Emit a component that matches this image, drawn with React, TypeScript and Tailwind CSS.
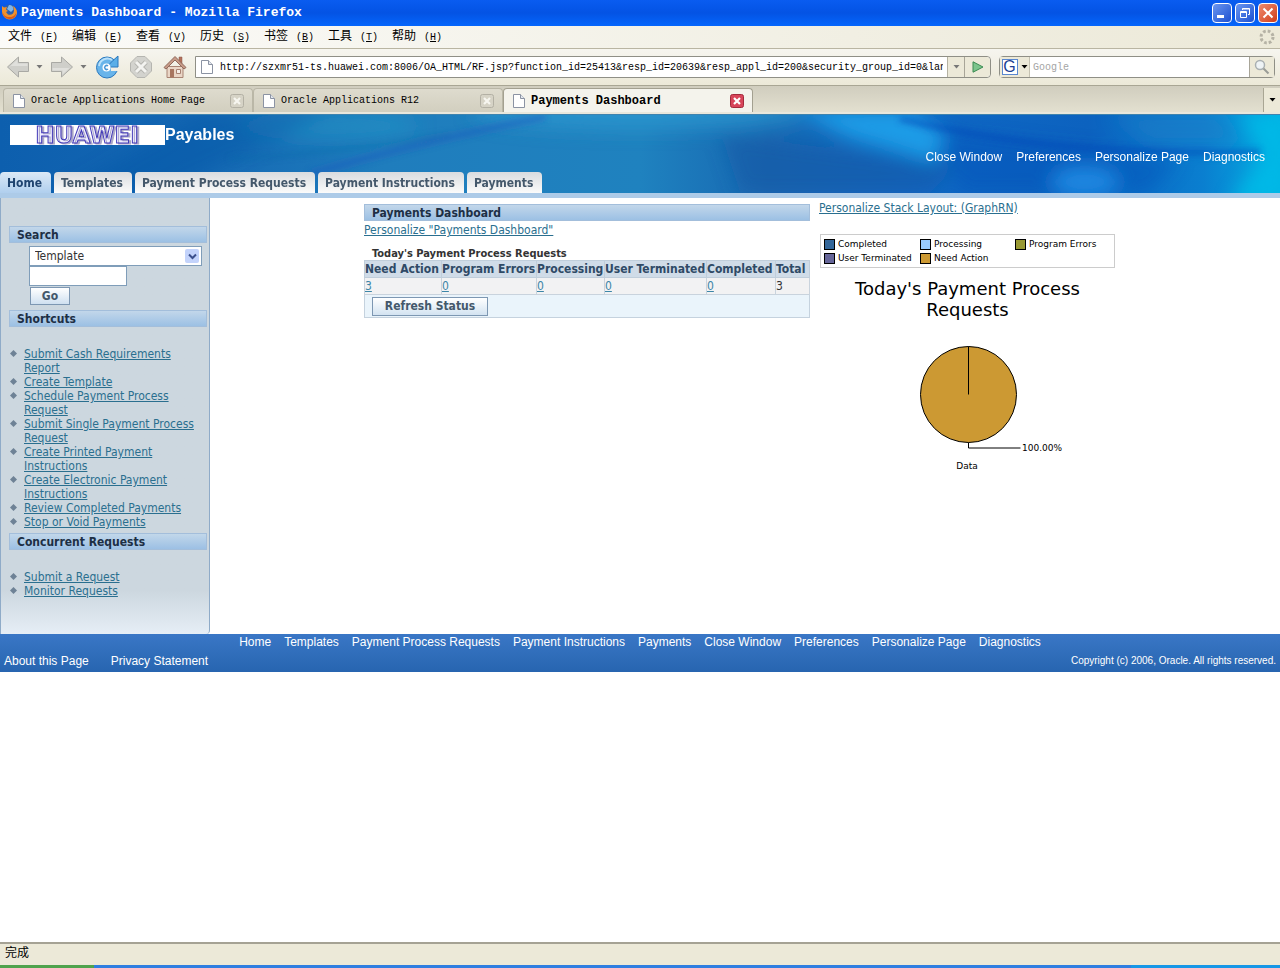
import React from 'react';

interface BrowserTab {
  title: string;
  active?: boolean;
}

interface LegendItem {
  label: string;
  color: string;
}

const menus = [
  { label: '文件', key: 'F' },
  { label: '编辑', key: 'E' },
  { label: '查看', key: 'V' },
  { label: '历史', key: 'S' },
  { label: '书签', key: 'B' },
  { label: '工具', key: 'T' },
  { label: '帮助', key: 'H' }
];

const browserTabs: BrowserTab[] = [
  { title: 'Oracle Applications Home Page' },
  { title: 'Oracle Applications R12' },
  { title: 'Payments Dashboard', active: true }
];

const pageTabs = ['Home', 'Templates', 'Payment Process Requests', 'Payment Instructions', 'Payments'];
const globalLinks = ['Close Window', 'Preferences', 'Personalize Page', 'Diagnostics'];

const shortcuts = [
  'Submit Cash Requirements Report',
  'Create Template',
  'Schedule Payment Process Request',
  'Submit Single Payment Process Request',
  'Create Printed Payment Instructions',
  'Create Electronic Payment Instructions',
  'Review Completed Payments',
  'Stop or Void Payments'
];
const concurrent = ['Submit a Request', 'Monitor Requests'];

const columns = [
  { name: 'Need Action', value: 3, width: 'w-[77px]' },
  { name: 'Program Errors', value: 0, width: 'w-[95px]' },
  { name: 'Processing', value: 0, width: 'w-[68px]' },
  { name: 'User Terminated', value: 0, width: 'w-[102px]' },
  { name: 'Completed', value: 0, width: 'w-[69px]' }
];

const legend: LegendItem[] = [
  { label: 'Completed', color: 'bg-[#336699]' },
  { label: 'Processing', color: 'bg-[#99ccff]' },
  { label: 'Program Errors', color: 'bg-[#999933]' },
  { label: 'User Terminated', color: 'bg-[#666699]' },
  { label: 'Need Action', color: 'bg-[#cc9933]' }
];

const Caret = ({ className = 'text-[#777]' }: { className?: string }) => (
  <svg width="7" height="4" viewBox="0 0 7 4" className={className}>
    <path d="M0.5 0h6L3.5 3.5z" fill="currentColor" />
  </svg>
);

const PageIcon = () => (
  <svg width="12" height="14" viewBox="0 0 12 14" className="shrink-0">
    <path d="M0.5 0.5h7l4 4v9h-11z" fill="#fff" stroke="#8b93a3" />
    <path d="M7.5 0.5v4h4" fill="#e3e8ef" stroke="#8b93a3" />
  </svg>
);

const FirefoxIcon = () => (
  <svg width="17" height="17" viewBox="0 0 17 17" className="mb-1 shrink-0">
    <circle cx="8.500" cy="8.500" r="7" fill="#2d5fae" />
    <path d="M8 2c3 0 4.500 2 4.500 4.500L10 9 6 6z" fill="#7fb6ea" />
    <path d="M1 3l2 1.500L6 4 5 6.500l2 1.500-2 1 2 2.500c3 1 6-.5 6-4 0-2-.5-3-1.500-4.500 3 1 4.500 4 4.500 6.500 0 4-3.500 7-7.500 7S1 12.500 1 8.500z" fill="#f0912d" />
    <path d="M1.500 9c1 3 3 5 7 5s5.500-2 6.500-4c0 4-3 6-6.500 6S2 13 1.500 9z" fill="#d9591b" />
  </svg>
);

const ArrowIcon = ({ flip = false }: { flip?: boolean }) => (
  <svg width="22" height="22" viewBox="0 0 22 22" className={flip ? 'rotate-180' : ''}>
    <path d="M0.5 11L11.500 1v5.500h10v9h-10V21z" fill="#cfcfca" stroke="#a9a9a4" />
    <path d="M2.500 11L10.500 3.500v4h10V10H4z" fill="#e0e0dc" />
  </svg>
);

const ReloadIcon = () => (
  <svg width="24" height="24" viewBox="0 0 24 24">
    <circle cx="12" cy="12.500" r="10.500" fill="#68b4ea" stroke="#2a78bd" />
    <path d="M16 12h8v4h-8z" fill="#f1efe6" />
    <path d="M23 1v11H12l3.500-4 2.500-2.500z" fill="#5aaee8" stroke="#2a78bd" />
    <path d="M4 11a8.500 8.500 0 0 1 13-6" fill="none" stroke="#b9e0fa" strokeWidth="2" />
    <circle cx="11.500" cy="12.500" r="4" fill="#fff" />
    <path d="M13 11a2 2 0 1 0 0 3" fill="none" stroke="#4a97d6" strokeWidth="1.500" />
  </svg>
);

const StopIcon = () => (
  <svg width="22" height="22" viewBox="0 0 22 22">
    <path d="M7 0.500h8L21.500 7v8L15 21.500H7L0.500 15V7z" fill="#d3d3ce" stroke="#b5b5b0" />
    <path d="M6 6l10 10M16 6L6 16" stroke="#b5b5b0" strokeWidth="5" />
    <path d="M6 6l10 10M16 6L6 16" stroke="#f3f3f0" strokeWidth="3" />
  </svg>
);

const HomeIcon = () => (
  <svg width="24" height="24" viewBox="0 0 24 24">
    <path d="M16 2h3v7h-3z" fill="#b4705a" stroke="#8a5a4c" strokeWidth="0.500" />
    <path d="M4 11.500h16V22.500H4z" fill="#ead6c6" stroke="#a88373" />
    <path d="M1 12.500L12 1.500l11 11-2 1.500-9-9-9 9z" fill="#c79a87" stroke="#8f6a5c" />
    <path d="M7 14h4v8.500H7z" fill="#a87660" />
    <path d="M13.500 14.500h4v4h-4z" fill="#f6eee8" stroke="#a88373" />
  </svg>
);

const CloseIcon = ({ active = false }: { active?: boolean }) => (
  <svg width="14" height="14" viewBox="0 0 14 14">
    <rect x="0.500" y="0.500" width="13" height="13" rx="2" fill={active ? '#d8455a' : '#d6d3c6'} stroke={active ? '#a32a3c' : '#b3b0a4'} />
    <path d="M4 4l6 6M10 4l-6 6" stroke={active ? '#fff' : '#f7f6f0'} strokeWidth="2.200" />
  </svg>
);

const Throbber = () => (
  <svg width="16" height="16" viewBox="0 0 16 16">
    <circle cx="8" cy="8" r="6" fill="none" stroke="#b5b2a5" strokeWidth="3" strokeDasharray="2.700 2.010" />
  </svg>
);

const Logo = () => (
  <svg width="155" height="20" viewBox="0 0 155 20" className="overflow-visible bg-white font-['DejaVu_Sans',sans-serif] font-bold [filter:drop-shadow(0_0_0_#fff)]" role="img" aria-label="HUAWEI">
    <text x="77" y="18" fontSize="23" textAnchor="middle" fill="#f1efff" stroke="#4138b8" className="[text-shadow:2px_1px_0_#aaa6c8]">HUAWEI</text>
  </svg>
);

const BannerArt = () => (
  <svg className="absolute inset-0 h-full w-full" viewBox="0 0 1280 79" preserveAspectRatio="none" aria-hidden="true">
    <defs>
      <linearGradient id="sea" x1="0" x2="1" y1="0" y2="0">
        <stop offset="0" stopColor="#0d5fae" />
        <stop offset="0.150" stopColor="#1467b3" />
        <stop offset="0.300" stopColor="#1f7dbd" />
        <stop offset="0.500" stopColor="#1f82bf" />
        <stop offset="0.600" stopColor="#1768b2" />
        <stop offset="0.720" stopColor="#0f68c4" />
        <stop offset="0.850" stopColor="#0c62bf" />
        <stop offset="0.940" stopColor="#0a7fd0" />
        <stop offset="1" stopColor="#04aee2" />
      </linearGradient>
      <filter id="soft" x="-30%" y="-60%" width="160%" height="220%">
        <feGaussianBlur stdDeviation="9" />
      </filter>
      <filter id="fine" x="-20%" y="-50%" width="140%" height="200%">
        <feGaussianBlur stdDeviation="3" />
      </filter>
    </defs>
    <rect width="1280" height="79" fill="url(#sea)" />
    <g filter="url(#soft)">
      <ellipse cx="330" cy="12" rx="90" ry="14" fill="#2497c8" opacity="0.500" />
      <ellipse cx="640" cy="0" rx="170" ry="16" fill="#2c96ce" opacity="0.800" />
      <path d="M200 0L60 79H160L330 0z" fill="#0a52a4" opacity="0.400" />
      <path d="M720 20L960 50 930 79H740z" fill="#0d55a4" opacity="0.500" />
      <path d="M790 -5H910L945 20 935 48 850 24z" fill="#1d9be6" />
      <path d="M945 20L1180 45 1150 79H960z" fill="#0a4fb8" opacity="0.400" />
      <ellipse cx="1085" cy="68" rx="34" ry="16" fill="#1f86e0" />
      <path d="M1110 0H1220L1240 30H1150z" fill="#1b7fc6" opacity="0.600" />
      <path d="M1240 0H1290V90H1230L1265 40z" fill="#02b8e6" />
    </g>
    <g filter="url(#fine)" fill="none">
      <path d="M310 60Q410 30 545 3" stroke="#2458c0" strokeWidth="6" opacity="0.500" />
      <path d="M230 45Q330 40 450 20" stroke="#1a6aa8" strokeWidth="3" opacity="0.500" />
      <path d="M900 5Q1000 28 1090 34T1260 38" stroke="#0746b8" strokeWidth="5" opacity="0.600" />
    </g>
    <rect width="1280" height="1" fill="#3f83ae" />
  </svg>
);

const SectionHeader = ({ title }: { title: string }) => (
  <h2 className="h-[17px] border border-[#a3bedb] bg-linear-to-b from-[#c2d7ea] to-[#9cc0e4] pl-[7px] text-xs leading-4 font-bold text-[#1d2f45]">
    {title}
  </h2>
);

const LinkList = ({ items }: { items: string[] }) => (
  <ul className="pt-5 text-xs leading-[14px]">
    {items.map((item) => (
      <li key={item} className="flex">
        <svg width="7" height="7" viewBox="0 0 7 7" className="mt-[3px] mr-[7px] ml-px shrink-0">
          <path d="M3.500 0L7 3.500 3.500 7 0 3.500z" fill="#6e8296" />
        </svg>
        <a href="#" className="text-[#2a6f8f] underline">{item}</a>
      </li>
    ))}
  </ul>
);

const BrowserChrome = () => (
  <header className="font-['Liberation_Mono','Noto_Sans_CJK_SC',monospace] text-black">
    <div className="flex h-[26px] items-center justify-between bg-linear-to-b from-[#0a5cf0] via-[#0453e4] to-[#0566fc] pr-[2px] pl-px">
      <div className="flex items-center gap-[3px]">
        <FirefoxIcon />
        <h1 className="text-[13px] leading-4 font-bold whitespace-pre text-white">Payments Dashboard - Mozilla Firefox</h1>
      </div>
      <div className="flex gap-[3px]">
        <button aria-label="Minimize" className="flex size-5 items-end rounded-sm border border-white bg-linear-to-br from-[#6a95f0] to-[#1d4fd0] p-1">
          <span className="h-[3px] w-[7px] bg-white" />
        </button>
        <button aria-label="Restore" className="flex size-5 items-center justify-center rounded-sm border border-white bg-linear-to-br from-[#6a95f0] to-[#1d4fd0]">
          <svg width="12" height="12" viewBox="0 0 12 12" fill="none" stroke="#fff">
            <path d="M3.500 3V1.500h7v6H9M3.500 2h7" />
            <path d="M1.500 4.500h6v6h-6zM1.500 5.500h6" />
          </svg>
        </button>
        <button aria-label="Close" className="flex size-5 items-center justify-center rounded-sm border border-white bg-linear-to-br from-[#ef8a6c] to-[#d03a12]">
          <svg width="12" height="12" viewBox="0 0 12 12">
            <path d="M1.500 1.500l9 9M10.500 1.500l-9 9" stroke="#fff" strokeWidth="2" />
          </svg>
        </button>
      </div>
    </div>

    <nav className="flex h-[23px] items-center justify-between border-b border-[#b9b5a2] bg-linear-to-r from-[#fbfbf9] to-[#ece9d8] pr-[5px] pl-2">
      <div className="flex">
        {menus.map((menu) => (
          <button key={menu.key} className="w-16 text-left text-xs leading-5 whitespace-nowrap">
            {menu.label}
            <span className="ml-2 text-[10px]">(<u>{menu.key}</u>)</span>
          </button>
        ))}
      </div>
      <Throbber />
    </nav>

    <div className="flex h-9 items-center bg-linear-to-b from-[#f6f5ef] to-[#ece9d8] pr-[5px] pl-[7px]">
      <button aria-label="Back"><ArrowIcon /></button>
      <button aria-label="Back history" className="ml-[7px]"><Caret /></button>
      <button aria-label="Forward" className="ml-2"><ArrowIcon flip /></button>
      <button aria-label="Forward history" className="ml-[7px]"><Caret /></button>
      <button aria-label="Reload" className="ml-2"><ReloadIcon /></button>
      <button aria-label="Stop" className="ml-[11px]"><StopIcon /></button>
      <button aria-label="Home page" className="ml-[11px]"><HomeIcon /></button>
      <div className="ml-2 flex h-[22px] min-w-0 flex-1 rounded-r-sm border border-[#8f8f86] bg-white">
        <div className="flex min-w-0 flex-1 items-center pr-1 pl-[5px]">
          <PageIcon />
          <input
            aria-label="Address"
            readOnly
            value="http://szxmr51-ts.huawei.com:8006/OA_HTML/RF.jsp?function_id=25413&resp_id=20639&resp_appl_id=200&security_group_id=0&lang_code=US"
            className="ml-[7px] min-w-0 flex-1 text-[10px] outline-none"
          />
        </div>
        <button aria-label="Address history" className="flex w-[17px] items-center justify-center border-l border-[#b5b2a2] bg-[#ece9d8]"><Caret /></button>
        <button aria-label="Go to address" className="flex w-[26px] items-center justify-center rounded-r-sm border-l border-[#a8a598] bg-[#ece9d8]">
          <svg width="12" height="12" viewBox="0 0 12 12">
            <path d="M1 0.800L11 6 1 11.200z" fill="#7cc48c" stroke="#3b8a52" />
          </svg>
        </button>
      </div>
      <div className="ml-2 flex h-[22px] w-[276px] rounded-sm border border-[#8f8f86] bg-white">
        <button aria-label="Search engine" className="flex w-[30px] items-center justify-center gap-[3px] border-r border-[#c5c2b2] bg-[#ece9d8]">
          <span className="flex size-4 items-center justify-center border border-[#5a88d0] bg-white font-['Liberation_Sans',sans-serif] text-base leading-4 text-[#1b3f94]">G</span>
          <Caret className="text-black" />
        </button>
        <input aria-label="Web search" placeholder="Google" className="min-w-0 flex-1 pl-[3px] text-[10px] outline-none placeholder:text-[#a5a5a5]" />
        <button aria-label="Search the web" className="flex w-[25px] items-center justify-center border-l border-[#a8a598] bg-[#ece9d8]">
          <svg width="16" height="16" viewBox="0 0 16 16" fill="none">
            <circle cx="6" cy="6" r="4.500" fill="#eef3f5" stroke="#a9b0b2" strokeWidth="1.500" />
            <path d="M9.500 9.500l5 5" stroke="#999b96" strokeWidth="2" />
          </svg>
        </button>
      </div>
    </div>

    <div className="flex h-[29px] items-end justify-between border-t border-b-2 border-t-[#a9a694] border-b-[#e9e7dc] bg-linear-to-b from-[#d0cdbe] to-[#e3e0d0] pl-[3px]">
      <div className="flex">
        {browserTabs.map((tab) => (
          <div
            key={tab.title}
            className={`flex h-6 w-[250px] items-center rounded-t-sm border border-b-0 pr-2 pl-[9px] ${
              tab.active ? 'border-[#a3a090] bg-[#f4f3ec]' : 'border-[#bab7a7] bg-linear-to-b from-[#dedbce] to-[#d2cfbf]'
            }`}
          >
            <PageIcon />
            <button className={`ml-[6px] flex-1 text-left whitespace-nowrap ${tab.active ? 'text-xs font-bold' : 'text-[10px]'}`}>{tab.title}</button>
            <button aria-label={`Close ${tab.title}`}><CloseIcon active={tab.active} /></button>
          </div>
        ))}
      </div>
      <button aria-label="List all tabs" className="flex h-6 w-[17px] items-center justify-center border-l border-[#a9a694] bg-[#ece9d8]">
        <Caret className="text-black" />
      </button>
    </div>
  </header>
);

const Banner = () => (
  <div className="relative flex h-[79px] flex-col justify-between">
    <BannerArt />
    <div className="relative flex justify-between pt-[11px] pr-[15px] pl-[10px]">
      <div className="flex h-5 items-center">
        <Logo />
        <span className="font-['Liberation_Sans',sans-serif] text-base leading-5 font-bold text-white">Payables</span>
      </div>
      <nav className="mt-[25px] flex gap-[14px] font-['Liberation_Sans',sans-serif] text-xs leading-[14px] text-white">
        {globalLinks.map((link) => (
          <a key={link} href="#">{link}</a>
        ))}
      </nav>
    </div>
    <nav className="relative flex gap-[3px]">
      {pageTabs.map((tab, i) => (
        <a
          key={tab}
          href="#"
          className={`h-[21px] rounded-t-sm pr-[9px] pl-[7px] text-xs leading-[22px] font-bold ${
            i === 0 ? 'bg-linear-to-b from-[#dbe9f6] to-[#b0cfee] text-[#1f4470]' : 'bg-linear-to-b from-[#d9dcdf] to-[#fbfbfb] text-[#44586b]'
          }`}
        >
          {tab}
        </a>
      ))}
    </nav>
  </div>
);

const Sidebar = () => (
  <aside className="w-[210px] shrink-0 rounded-br border-r border-l border-[#8fabc8] bg-linear-to-b from-[#ccd7df] from-90% to-[#e6eef6] pt-7 pr-[2px] pb-9 pl-2">
    <SectionHeader title="Search" />
    <form className="mt-[3px] mb-[5px] ml-5 flex flex-col items-start">
      <div className="relative w-[173px]">
        <select aria-label="Search type" className="block h-5 w-full appearance-none border border-[#7f9db9] bg-white py-0 pl-[5px] text-xs leading-4 text-[#333]">
          <option>Template</option>
        </select>
        <span className="pointer-events-none absolute top-[3px] right-[3px] flex size-[14px] items-center justify-center rounded-xs bg-[#c3d3fb]">
          <svg width="9" height="7" viewBox="0 0 9 7">
            <path d="M1 1.500l3.500 3.500L8 1.500" fill="none" stroke="#3b4f8c" strokeWidth="2" />
          </svg>
        </span>
      </div>
      <input aria-label="Search text" className="h-5 w-[98px] border border-[#7f9db9] bg-white px-1 text-xs" />
      <button type="button" className="mt-px ml-px h-[18px] w-10 border border-[#7d97b2] bg-linear-to-b from-white to-[#cfe0f0] text-xs leading-4 font-bold text-[#44586b]">Go</button>
    </form>
    <SectionHeader title="Shortcuts" />
    <LinkList items={shortcuts} />
    <div className="mt-1">
      <SectionHeader title="Concurrent Requests" />
      <LinkList items={concurrent} />
    </div>
  </aside>
);

const RequestsTable = () => (
  <section className="w-[446px] pt-[6px] text-xs">
    <SectionHeader title="Payments Dashboard" />
    <a href="#" className="block leading-[19px] text-[#2a6f8f] underline">Personalize "Payments Dashboard"</a>
    <h3 className="mt-2 pl-2 text-[11px] leading-3 font-bold text-[#333]">Today's Payment Process Requests</h3>
    <table className="w-full table-fixed border-collapse border border-[#c5d2de] text-left whitespace-nowrap">
      <thead className="bg-[#d0dce8] text-[#2f4a66]">
        <tr>
          {columns.map((col) => (
            <th key={col.name} className={`h-4 border border-[#c0cedb] p-0 leading-4 ${col.width}`}>{col.name}</th>
          ))}
          <th className="border border-[#c0cedb] p-0 leading-4">Total</th>
        </tr>
      </thead>
      <tbody className="bg-[#f2f2f3]">
        <tr>
          {columns.map((col) => (
            <td key={col.name} className="border border-[#c9d3dd] p-0 leading-4">
              <a href="#" className="text-[#3c86a8] underline">{col.value}</a>
            </td>
          ))}
          <td className="border border-[#c9d3dd] p-0 leading-4 text-[#333]">3</td>
        </tr>
      </tbody>
    </table>
    <div className="flex h-[23px] items-center border border-t-0 border-[#c5d2de] bg-[#eaf4fb] pl-[7px]">
      <button className="h-[19px] w-[116px] border border-[#7d97b2] bg-linear-to-b from-white to-[#d3e3f1] leading-4 font-bold text-[#44586b]">Refresh Status</button>
    </div>
  </section>
);

const RequestsChart = () => (
  <section className="w-[307px] pt-[2px] text-xs">
    <a href="#" className="block leading-4 text-[#2a6f8f] underline">Personalize Stack Layout: (GraphRN)</a>
    <div className="font-['DejaVu_Sans',sans-serif] text-[9px] text-black">
      <ul className="mt-[18px] ml-px grid h-[34px] w-[295px] grid-cols-[96px_95px_auto] content-center border border-[#ccc] pl-[3px]">
        {legend.map((item) => (
          <li key={item.label} className="flex h-[14px] items-center gap-[3px] whitespace-nowrap">
            <span className={`size-[11px] shrink-0 border border-black ${item.color}`} />
            {item.label}
          </li>
        ))}
      </ul>
      <h3 className="mt-[10px] ml-px w-[295px] px-6 text-center text-lg leading-[21px]">Today's Payment Process Requests</h3>
      <svg width="295" height="160" viewBox="0 0 295 160" className="ml-px" role="img" aria-label="Need Action 100.00%">
        <circle cx="148.500" cy="74.500" r="48" fill="#cc9933" stroke="#000" />
        <path d="M148.500 26.500v48M148.500 122.500v5.500h52" fill="none" stroke="#000" />
        <text x="202" y="131" fontSize="9">100.00%</text>
        <text x="147" y="149" fontSize="9" textAnchor="middle">Data</text>
      </svg>
    </div>
  </section>
);

const PageFooter = () => (
  <footer className="h-[38px] bg-linear-to-b from-[#3a77c6] to-[#2765b0] px-1 font-['Liberation_Sans',sans-serif] text-xs text-white">
    <nav className="flex justify-center gap-[13px] leading-4">
      {[...pageTabs, ...globalLinks].map((link) => (
        <a key={link} href="#">{link}</a>
      ))}
    </nav>
    <div className="flex items-center justify-between leading-[22px]">
      <div className="flex gap-[22px]">
        <a href="#">About this Page</a>
        <a href="#">Privacy Statement</a>
      </div>
      <span className="text-[10px]">Copyright (c) 2006, Oracle. All rights reserved.</span>
    </div>
  </footer>
);

const App: React.FC = () => {
  return (
    <div className="flex min-h-screen flex-col bg-white">
      <BrowserChrome />
      <main className="flex-1 font-['DejaVu_Sans_Condensed','DejaVu_Sans',sans-serif]">
        <Banner />
        <div className="h-[5px] bg-[#adcbe8]" />
        <div className="flex">
          <Sidebar />
          <div className="flex flex-1 justify-center gap-[9px]">
            <RequestsTable />
            <RequestsChart />
          </div>
        </div>
        <PageFooter />
      </main>
      <div>
        <div className="h-[23px] border-t-2 border-[#a5a294] bg-[#ece9d8] pl-[5px] font-['Noto_Sans_CJK_SC',sans-serif] text-xs leading-4 text-black">完成</div>
        <div className="flex h-[3px]">
          <div className="w-[94px] bg-[#4fa34c]" />
          <div className="flex-1 bg-[#2f7ee0]" />
          <div className="w-[149px] bg-[#1697e6]" />
        </div>
      </div>
    </div>
  );
};

export default App;
